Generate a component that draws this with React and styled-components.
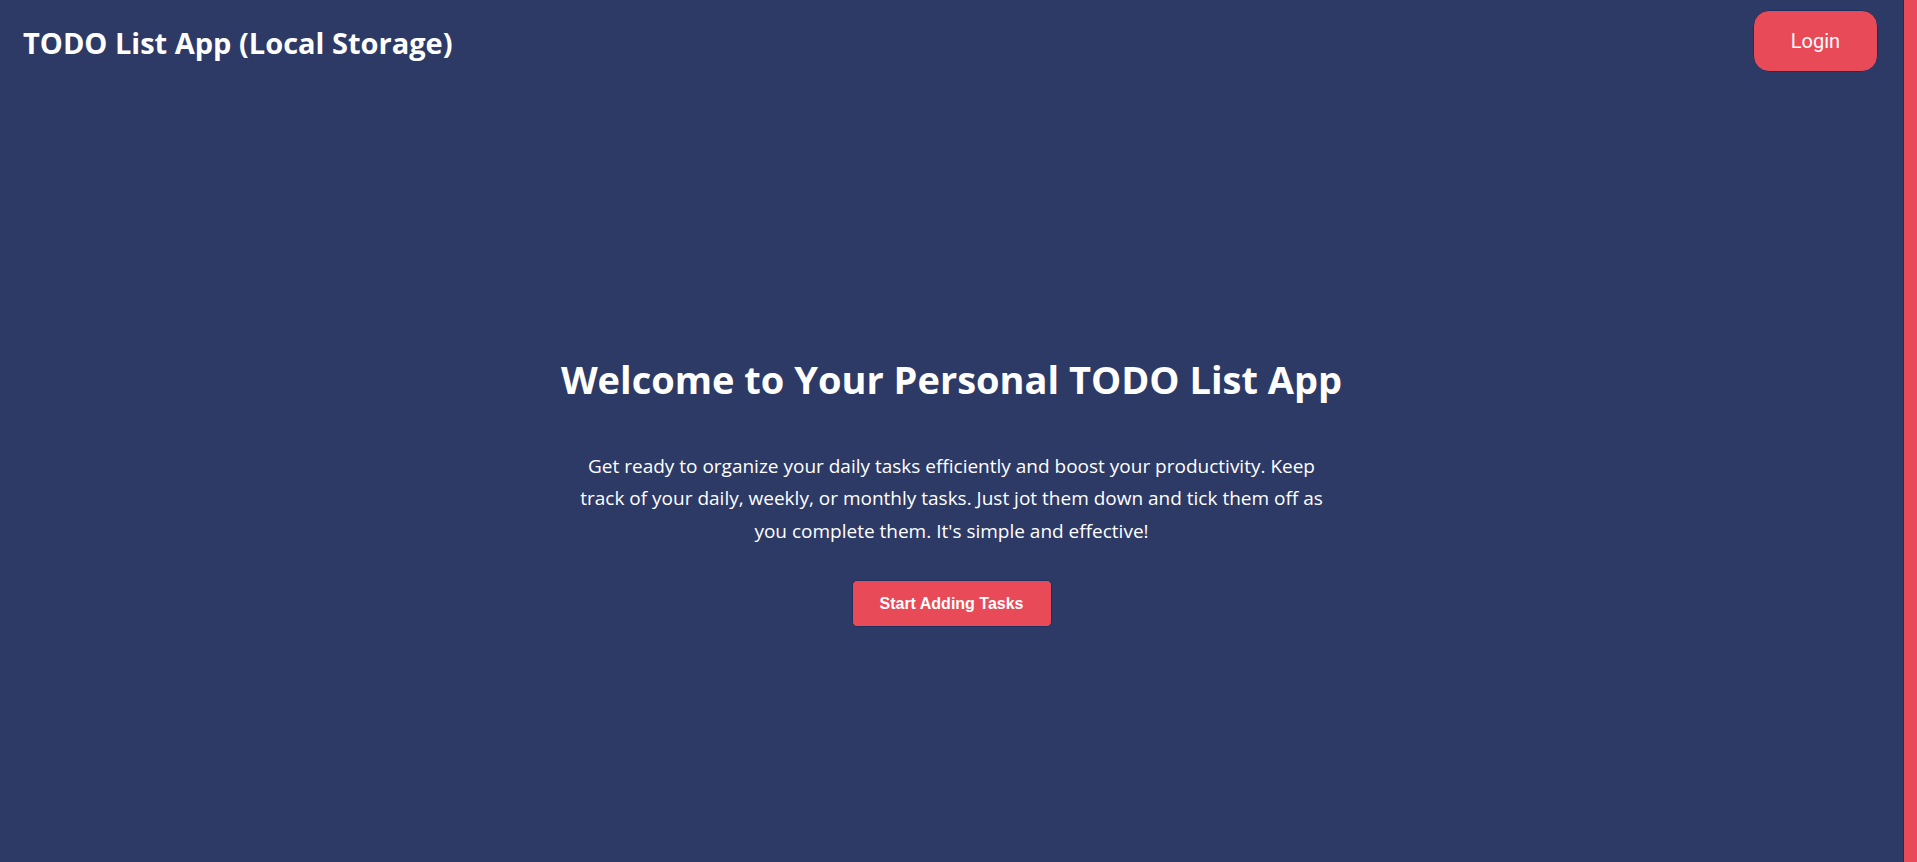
import React from 'react';
import styled, { createGlobalStyle } from 'styled-components';

const GlobalStyle = createGlobalStyle`
  html, body {
    margin: 0;
    padding: 0;
    height: 100%;
  }
  body {
    background: #2d3a66;
    font-family: 'Open Sans', 'Noto Sans', sans-serif;
    color: #ffffff;
    overflow: hidden;
  }
  #root {
    height: 100%;
  }
`;

const Page = styled.div`
  display: flex;
  height: 862px;
  background: #2d3a66;
`;

const Main = styled.div`
  flex: 1;
  display: flex;
  flex-direction: column;
`;

const SideStrip = styled.div`
  width: 13px;
  flex-shrink: 0;
  background: #e94a58;
  border-left: 1px solid #1c2c63;
`;

const Header = styled.header`
  display: flex;
  align-items: center;
  justify-content: space-between;
  height: 82px;
  padding: 0 25px 0 23px;
  box-sizing: border-box;
`;

const Brand = styled.h1`
  margin: 3px 0 0;
  font-size: 29px;
  font-weight: 700;
`;

const Button = styled.button`
  background: #e94a58;
  color: #ffffff;
  border: 1px solid #1f2f62;
  cursor: pointer;
  font-family: ${({ $font }) => $font};
  font-size: ${({ $size }) => $size};
  font-weight: ${({ $weight }) => $weight};
  border-radius: ${({ $radius }) => $radius};
  width: ${({ $w }) => $w};
  height: ${({ $h }) => $h};
  padding: 0;
`;

const Hero = styled.section`
  display: flex;
  flex-direction: column;
  align-items: center;
  text-align: center;
  padding-top: 270px;
`;

const Title = styled.h2`
  margin: 0;
  font-size: 38px;
  font-weight: 700;
  line-height: 54px;
`;

const Text = styled.p`
  margin: 44px 0 0;
  max-width: 755px;
  font-size: 19px;
  line-height: 32.4px;
`;

export default function App() {
  return (
    <>
      <GlobalStyle />
      <Page>
        <Main>
          <Header>
            <Brand>TODO List App (Local Storage)</Brand>
            <Button
              $font="Roboto, 'Liberation Sans', sans-serif"
              $size="20px"
              $weight={400}
              $radius="16px"
              $w="125px"
              $h="62px"
            >
              Login
            </Button>
          </Header>
          <Hero>
            <Title>Welcome to Your Personal TODO List App</Title>
            <Text>
              Get ready to organize your daily tasks efficiently and boost your productivity. Keep
              track of your daily, weekly, or monthly tasks. Just jot them down and tick them off as
              you complete them. It's simple and effective!
            </Text>
            <Button
              style={{ marginTop: 33 }}
              $font="'Liberation Sans', Arial, sans-serif"
              $size="16px"
              $weight={700}
              $radius="5px"
              $w="200px"
              $h="47px"
            >
              Start Adding Tasks
            </Button>
          </Hero>
        </Main>
        <SideStrip />
      </Page>
    </>
  );
}
